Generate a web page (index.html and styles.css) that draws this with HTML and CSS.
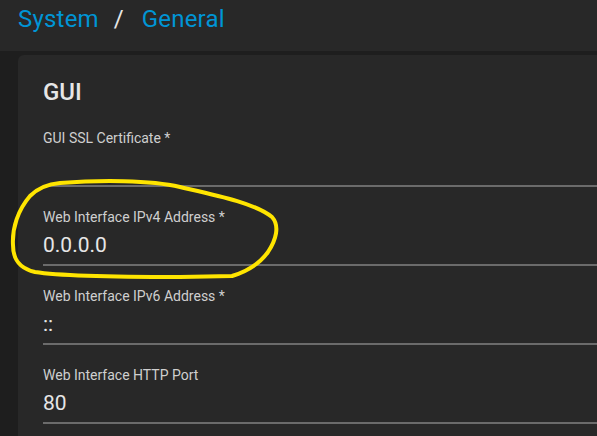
FILE: index.html
```html
<!DOCTYPE html>
<html lang="en">
<head>
<meta charset="utf-8">
<title>System / General</title>
<link rel="stylesheet" href="styles.css">
</head>
<body>
<header class="topbar">
  <nav class="crumbs">
    <span class="crumb">System</span>
    <span class="sep">/</span>
    <span class="crumb">General</span>
  </nav>
</header>
<main class="page">
  <section class="card">
    <h2 class="card-title">GUI</h2>
    <div class="field">
      <label class="field-label">GUI SSL Certificate *</label>
      <div class="field-value"></div>
    </div>
    <div class="field">
      <label class="field-label">Web Interface IPv4 Address *</label>
      <div class="field-value">0.0.0.0</div>
    </div>
    <div class="field">
      <label class="field-label">Web Interface IPv6 Address *</label>
      <div class="field-value">::</div>
    </div>
    <div class="field">
      <label class="field-label">Web Interface HTTP Port</label>
      <div class="field-value">80</div>
    </div>
  </section>
</main>
<svg class="annotation" width="597" height="436" viewBox="0 0 597 436" aria-hidden="true">
  <path d="M 60 183 C 100 180, 150 180, 180 187 C 215 195, 255 203, 272 217 C 280 226, 276 240, 268 252 C 258 266, 245 272, 232 276 L 180 277 C 120 277, 60 276, 35 272 C 18 268, 13 258, 13 245 C 12 228, 18 210, 30 196 C 38 188, 48 184, 60 183 Z"/>
</svg>
</body>
</html>
```
FILE: styles.css
```css
html, body {
  margin: 0;
  padding: 0;
  height: 100%;
  overflow: hidden;
  background: #1e1e1e;
  font-family: Roboto, "Liberation Sans", sans-serif;
}

.topbar {
  height: 51px;
  background: #282828;
  box-sizing: border-box;
  padding: 5px 0 0 18px;
}

.crumbs {
  display: flex;
  align-items: baseline;
  font-size: 24px;
  line-height: 28px;
}

.crumb {
  color: #0095d5;
  letter-spacing: 0.2px;
}

.sep {
  color: #e6e6e6;
  margin: 0 18px 0 15px;
}

.page {
  padding: 4px 0 0 18px;
}

.card {
  background: #282828;
  border-radius: 6px 0 0 0;
  box-sizing: border-box;
  height: 381px;
  padding: 23px 0 0 25px;
}

.card-title {
  margin: 0 0 2px;
  font-size: 24px;
  line-height: 28px;
  font-weight: 500;
  color: #e6e6e6;
}

.field {
  display: flex;
  flex-direction: column;
  padding: 22px 0 7px;
  border-bottom: 2px solid #6b6b6b;
}

.field-label {
  font-size: 14px;
  line-height: 16px;
  color: #cfcfcf;
}

.field-value {
  margin-top: 8px;
  height: 24px;
  font-size: 21px;
  line-height: 24px;
  color: #e6e6e6;
}

.annotation {
  position: absolute;
  left: 0;
  top: 0;
  pointer-events: none;
}

.annotation path {
  fill: none;
  stroke: #ffe500;
  stroke-width: 4;
  stroke-linejoin: round;
}
```
